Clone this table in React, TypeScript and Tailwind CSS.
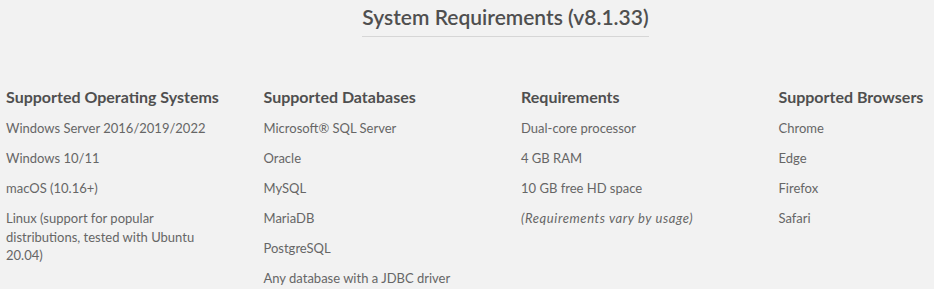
const COLUMNS: { title: string; items: { text: string; italic?: boolean }[] }[] = [
  {
    title: "Supported Operating Systems",
    items: [
      { text: "Windows Server 2016/2019/2022" },
      { text: "Windows 10/11" },
      { text: "macOS (10.16+)" },
      { text: "Linux (support for popular distributions, tested with Ubuntu 20.04)" },
    ],
  },
  {
    title: "Supported Databases",
    items: [
      { text: "Microsoft® SQL Server" },
      { text: "Oracle" },
      { text: "MySQL" },
      { text: "MariaDB" },
      { text: "PostgreSQL" },
      { text: "Any database with a JDBC driver" },
    ],
  },
  {
    title: "Requirements",
    items: [
      { text: "Dual-core processor" },
      { text: "4 GB RAM" },
      { text: "10 GB free HD space" },
      { text: "(Requirements vary by usage)", italic: true },
    ],
  },
  {
    title: "Supported Browsers",
    items: [{ text: "Chrome" }, { text: "Edge" }, { text: "Firefox" }, { text: "Safari" }],
  },
];

export default function App() {
  return (
    <div className="h-[289px] w-[934px] overflow-hidden bg-[#f2f2f2] font-['Lato','Liberation_Sans',sans-serif]">
      <div className="w-[1011px]">
        {/* Title */}
        <div className="flex justify-center pt-[4px]">
          <h2 className="border-b border-[#d6d6d6] pb-[6px] text-[21px] font-semibold leading-[26px] text-[#4f4f4f]">
            System Requirements (v8.1.33)
          </h2>
        </div>

        {/* Columns */}
        <div className="ml-[6px] mt-[50px] grid grid-cols-[repeat(4,257.5px)]">
          {COLUMNS.map((col) => (
            <div key={col.title} className="pr-[45px]">
              <h3 className="whitespace-nowrap text-[16px] font-bold leading-[20px] text-[#4f4f4f]">{col.title}</h3>
              <ul className="mt-[12px] space-y-[11.5px]">
                {col.items.map((item) => (
                  <li
                    key={item.text}
                    className={`text-[13px] leading-[18.5px] text-[#666] ${item.italic ? "italic tracking-[0.6px]" : ""}`}
                  >
                    {item.text}
                  </li>
                ))}
              </ul>
            </div>
          ))}
        </div>
      </div>
    </div>
  );
}
